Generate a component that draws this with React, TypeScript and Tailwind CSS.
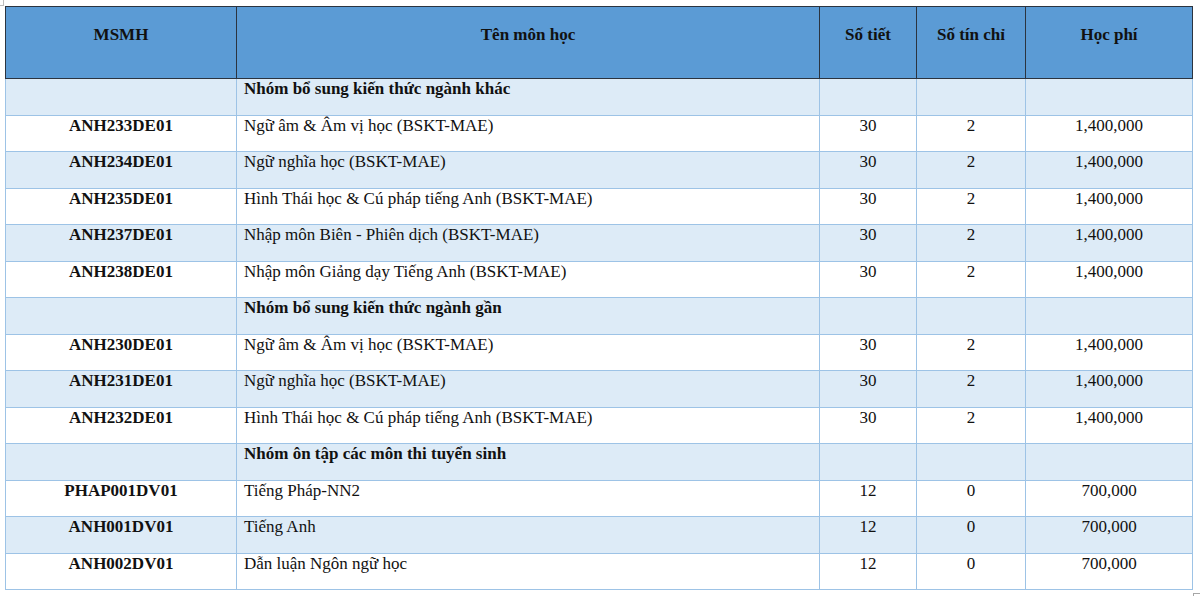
import React from "react";

type Row =
  | { kind: "group"; title: string }
  | { kind: "course"; code: string; name: string; hours: string; credits: string; fee: string };

const rows: Row[] = [
  { kind: "group", title: "Nhóm bổ sung kiến thức ngành khác" },
  { kind: "course", code: "ANH233DE01", name: "Ngữ âm & Âm vị học (BSKT-MAE)", hours: "30", credits: "2", fee: "1,400,000" },
  { kind: "course", code: "ANH234DE01", name: "Ngữ nghĩa học (BSKT-MAE)", hours: "30", credits: "2", fee: "1,400,000" },
  { kind: "course", code: "ANH235DE01", name: "Hình Thái học & Cú pháp tiếng Anh (BSKT-MAE)", hours: "30", credits: "2", fee: "1,400,000" },
  { kind: "course", code: "ANH237DE01", name: "Nhập môn Biên - Phiên dịch (BSKT-MAE)", hours: "30", credits: "2", fee: "1,400,000" },
  { kind: "course", code: "ANH238DE01", name: "Nhập môn Giảng dạy Tiếng Anh (BSKT-MAE)", hours: "30", credits: "2", fee: "1,400,000" },
  { kind: "group", title: "Nhóm bổ sung kiến thức ngành gần" },
  { kind: "course", code: "ANH230DE01", name: "Ngữ âm & Âm vị học (BSKT-MAE)", hours: "30", credits: "2", fee: "1,400,000" },
  { kind: "course", code: "ANH231DE01", name: "Ngữ nghĩa học (BSKT-MAE)", hours: "30", credits: "2", fee: "1,400,000" },
  { kind: "course", code: "ANH232DE01", name: "Hình Thái học & Cú pháp tiếng Anh (BSKT-MAE)", hours: "30", credits: "2", fee: "1,400,000" },
  { kind: "group", title: "Nhóm ôn tập các môn thi tuyển sinh" },
  { kind: "course", code: "PHAP001DV01", name: "Tiếng Pháp-NN2", hours: "12", credits: "0", fee: "700,000" },
  { kind: "course", code: "ANH001DV01", name: "Tiếng Anh", hours: "12", credits: "0", fee: "700,000" },
  { kind: "course", code: "ANH002DV01", name: "Dẫn luận Ngôn ngữ học", hours: "12", credits: "0", fee: "700,000" },
];

const cell = "border-r border-b border-[#9dc3e6] leading-[19px] pt-[0px]";

export default function App() {
  return (
    <div className="relative w-[1200px] h-[596px] bg-white text-[17px] text-[#111] [font-family:'Liberation_Serif','Times_New_Roman',serif]">
      {/* corner marks */}
      <div className="absolute left-0 top-[5px] w-[4px] h-px bg-[#bdbdbd]" />
      <div className="absolute left-[3px] top-0 w-px h-[5px] bg-[#bdbdbd]" />
      <div className="absolute left-[1193px] top-[593px] w-[7px] h-px bg-[#a6a6a6]" />
      <div className="absolute left-[1193px] top-[593px] w-px h-[3px] bg-[#a6a6a6]" />

      <div className="absolute left-[5px] top-[6px] w-[1188px]">
        <div className="flex h-[73px] bg-[#5b9bd5] font-bold border-l border-t border-[#2b3440]">
          <div className="w-[231px] border-r border-b border-[#2b3440] text-center pt-[18px] leading-[19px]">MSMH</div>
          <div className="w-[583px] border-r border-b border-[#2b3440] text-center pt-[18px] leading-[19px]">Tên môn học</div>
          <div className="w-[97px] border-r border-b border-[#2b3440] text-center pt-[18px] leading-[19px]">Số tiết</div>
          <div className="w-[109px] border-r border-b border-[#2b3440] text-center pt-[18px] leading-[19px]">Số tín chỉ</div>
          <div className="w-[167px] border-r border-b border-[#2b3440] text-center pt-[18px] leading-[19px]">Học phí</div>
        </div>
        {rows.map((r, i) => {
          const h = i % 2 === 0 ? "h-[37px]" : "h-[36px]";
          const banded = r.kind === "group" || i % 2 === 0;
          const bg = banded ? "bg-[#ddebf7]" : "bg-white";
          return (
            <div key={i} className={`flex border-l border-[#9dc3e6] ${h} ${bg}`}>
              {r.kind === "group" ? (
                <>
                  <div className={`w-[231px] ${cell}`} />
                  <div className={`w-[583px] pl-[7px] font-bold ${cell}`}>{r.title}</div>
                  <div className={`w-[97px] ${cell}`} />
                  <div className={`w-[109px] ${cell}`} />
                  <div className={`w-[167px] ${cell}`} />
                </>
              ) : (
                <>
                  <div className={`w-[231px] text-center font-bold ${cell}`}>{r.code}</div>
                  <div className={`w-[583px] pl-[7px] ${cell}`}>{r.name}</div>
                  <div className={`w-[97px] text-center ${cell}`}>{r.hours}</div>
                  <div className={`w-[109px] text-center ${cell}`}>{r.credits}</div>
                  <div className={`w-[167px] text-center ${cell}`}>{r.fee}</div>
                </>
              )}
            </div>
          );
        })}
      </div>
    </div>
  );
}
